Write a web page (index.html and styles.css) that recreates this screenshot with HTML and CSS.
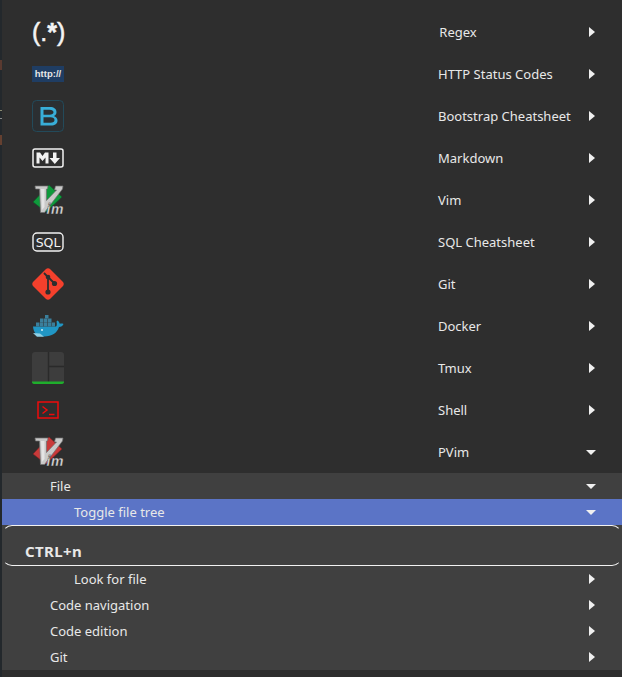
FILE: index.html
```html
<!DOCTYPE html>
<html lang="en">
<head>
<meta charset="utf-8">
<title>Cheatsheets</title>
<link rel="stylesheet" href="styles.css">
</head>
<body>
<svg class="defs" width="0" height="0" aria-hidden="true">
  <defs>
    <g id="vim-v">
      <path d="M3 2H16L15.500 5H14.500V16.500L24.500 6H22.500L23.500 2H31L30.500 5L12.500 28.500H8.500L7.500 5H3.500Z" fill="#c9c9c9" stroke="#6e6e6e" stroke-width=".7"/>
      <path d="M9 5H12.500V23L10 26Z" fill="#e4e4e4"/>
    </g>
  </defs>
</svg>
<main class="menu">
  <section class="row"><span class="icon"><span class="regex">(.<b>*</b>)</span></span><span class="label">Regex</span><span class="arrow right"></span></section>
  <section class="row"><span class="icon"><span class="http">http://</span></span><span class="label">HTTP Status Codes</span><span class="arrow right"></span></section>
  <section class="row"><span class="icon"><svg width="32" height="32" viewBox="0 0 32 32"><rect x=".5" y=".5" width="31" height="31" rx="4" fill="#2b2f32" stroke="#234a5a"/><path fill="#38aed8" fill-rule="evenodd" d="M8.500 7H18C22 7 24.500 9 24.500 12C24.500 14 23.500 15.400 21.800 16C24 16.600 25.500 18.300 25.500 20.500C25.500 23.700 23 25.500 19 25.500H8.500ZM11.500 9.800V14.700H17.500C20 14.700 21.500 13.800 21.500 12.200C21.500 10.700 20 9.800 17.500 9.800ZM11.500 17.300V22.700H18.500C21 22.700 22.500 21.700 22.500 20C22.500 18.300 21 17.300 18.500 17.300Z"/></svg></span><span class="label">Bootstrap Cheatsheet</span><span class="arrow right"></span></section>
  <section class="row"><span class="icon"><svg width="32" height="20" viewBox="0 0 32 20"><rect x="1" y="1" width="30" height="18" rx="2" fill="#2e2e2e" stroke="#f2f2f2" stroke-width="1.500"/><path fill="#f2f2f2" d="M4.500 15.500V4.500H8L10.500 8L13 4.500H16.500V15.500H13.500V9.500L10.500 13L7.500 9.500V15.500ZM21 4.500H24.500V10H28L22.800 16L17.500 10H21Z"/></svg></span><span class="label">Markdown</span><span class="arrow right"></span></section>
  <section class="row"><span class="icon"><svg width="32" height="32" viewBox="0 0 32 32"><path d="M1 18L17 1L30 13L14 28Z" fill="#0f9a3c" stroke="#0a5c25" stroke-width=".6"/><use href="#vim-v"/><text class="vim-im" x="14.500" y="30">im</text></svg></span><span class="label">Vim</span><span class="arrow right"></span></section>
  <section class="row"><span class="icon"><svg width="32" height="20" viewBox="0 0 32 20"><rect x="1" y="1" width="30" height="18" rx="4" fill="none" stroke="#f2f2f2" stroke-width="1.400"/><text class="sql" x="16" y="15">SQL</text></svg></span><span class="label">SQL Cheatsheet</span><span class="arrow right"></span></section>
  <section class="row"><span class="icon"><svg width="32" height="32" viewBox="0 0 32 32"><path fill="#f4402c" d="M14 1C15 0 17 0 18 1L31 14C32 15 32 17 31 18L18 31C17 32 15 32 14 31L1 18C0 17 0 15 1 14Z"/><path d="M12 5L16 9V23M16 9L22 15" fill="none" stroke="#2e2e2e" stroke-width="1.800"/><circle cx="16" cy="24" r="2.600" fill="#2e2e2e"/><circle cx="16" cy="9" r="2.300" fill="#2e2e2e"/><circle cx="22.500" cy="15.500" r="2.600" fill="#2e2e2e"/></svg></span><span class="label">Git</span><span class="arrow right"></span></section>
  <section class="row"><span class="icon"><svg width="32" height="24" viewBox="0 0 32 24"><path fill="#2196c4" d="M1 12.500H24C25 12 25 9.500 24.500 7.500L25.500 6.500C27 7.500 27.500 8.800 27.800 9.800C29 9.400 30.500 9.500 31.500 10C30.800 12 29 13 27 13C25 19 20 22.500 12 22.500C5 22.500 1.500 19 1 12.500Z"/><g fill="#3a7f9c"><rect x="4" y="8.500" width="3.500" height="4"/><rect x="8" y="8.500" width="3.500" height="4"/><rect x="12" y="8.500" width="3.500" height="4"/><rect x="16" y="8.500" width="3.500" height="4"/><rect x="20" y="8.500" width="3" height="4"/><rect x="8" y="4.500" width="3.500" height="4"/><rect x="12" y="4.500" width="3.500" height="4"/><rect x="16" y="4.500" width="3.500" height="4"/><rect x="13" y="1" width="3.500" height="3.500"/></g><path fill="#8fd0e6" d="M1 19L8 19.500L12 22.800H5Z"/><circle cx="10" cy="16" r="1" fill="#d5eef7"/></svg></span><span class="label">Docker</span><span class="arrow right"></span></section>
  <section class="row"><span class="icon"><svg width="32" height="32" viewBox="0 0 32 32"><path fill="#3d3d3d" d="M3 0H29A3 3 0 0 1 32 3V30H0V3A3 3 0 0 1 3 0Z"/><path d="M16.500 0V30M16.500 14.500H32" stroke="#2a2a2a" stroke-width="1.400"/><path fill="#1fae2c" d="M0 29.500H32V30C32 31.500 31 32 29 32H3C1 32 0 31.500 0 30Z"/></svg></span><span class="label">Tmux</span><span class="arrow right"></span></section>
  <section class="row"><span class="icon"><svg width="22" height="18" viewBox="0 0 22 18"><rect x="1" y="1" width="20" height="16" fill="none" stroke="#ee0b0b" stroke-width="1.500"/><path d="M5.500 5.500L10 9L5.500 12.500" fill="none" stroke="#ee0b0b" stroke-width="1.500"/><path d="M12 13.500H17.500" stroke="#ee0b0b" stroke-width="1.500"/></svg></span><span class="label">Shell</span><span class="arrow right"></span></section>
  <section class="row"><span class="icon"><svg width="32" height="32" viewBox="0 0 32 32"><path d="M1 18L17 1L30 13L14 28Z" fill="#c93a3a" stroke="#7c2020" stroke-width=".6"/><use href="#vim-v"/><text class="vim-im" x="14.500" y="30">im</text></svg></span><span class="label">PVim</span><span class="arrow down"></span></section>

  <div class="sub">
    <div class="sub-row"><span class="sub-label">File</span><span class="arrow down"></span></div>
    <div class="sub-row nested active"><span class="sub-label">Toggle file tree</span><span class="arrow down"></span></div>
    <div class="keys">CTRL+n</div>
    <div class="sub-row nested"><span class="sub-label">Look for file</span><span class="arrow right"></span></div>
    <div class="sub-row"><span class="sub-label">Code navigation</span><span class="arrow right"></span></div>
    <div class="sub-row"><span class="sub-label">Code edition</span><span class="arrow right"></span></div>
    <div class="sub-row"><span class="sub-label">Git</span><span class="arrow right"></span></div>
  </div>
</main>
</body>
</html>
```

FILE: styles.css
```css
* { box-sizing: border-box; }

html, body {
  margin: 0;
  height: 100%;
  overflow: hidden;
}

body {
  background: #2e2e2e;
  color: #e8e8e8;
  font-family: "Noto Sans", "Open Sans", sans-serif;
  font-size: 13px;
}

.defs { display: block; height: 0; }

.menu {
  min-height: 100vh;
  padding: 11px 0 7px 2px;
  background: linear-gradient(
    #23282c 0 60px, #5a3a30 60px 70px, #23282c 70px 110px,
    #8a8a70 110px 111px, #23282c 111px 118px, #8a8a8a 118px 119px,
    #23282c 119px 135px, #654030 135px 145px, #23282c 145px
  ) left top / 2px 100% no-repeat;
}

.row {
  display: flex;
  align-items: center;
  height: 42px;
  padding-left: 30px;
}

.icon {
  flex: 0 0 32px;
  height: 32px;
  display: flex;
  align-items: center;
  justify-content: center;
}

.label {
  flex: 1;
  margin-left: 374px;
}

.arrow {
  flex: 0 0 auto;
  width: 0;
  height: 0;
}

.row .arrow, .sub-row .arrow { margin-right: 26px; }

.arrow.right {
  border-top: 5px solid transparent;
  border-bottom: 5px solid transparent;
  border-left: 6px solid #f0f0f0;
  margin-left: 3px;
  margin-right: 27px;
}

.arrow.down {
  border-left: 5px solid transparent;
  border-right: 5px solid transparent;
  border-top: 5px solid #f0f0f0;
}

.regex {
  font-family: "Liberation Sans", sans-serif;
  font-size: 25px;
  color: #f4f4f4;
  line-height: 1;
  white-space: nowrap;
  -webkit-text-stroke: .5px #f4f4f4;
}

.http {
  display: block;
  width: 32px;
  height: 16px;
  background: #1f3d63;
  color: #e6e6e6;
  font-family: "Liberation Sans", sans-serif;
  font-size: 9.500px;
  font-weight: 700;
  line-height: 16px;
  text-align: center;
}

.vim-im {
  font-family: "Liberation Sans", sans-serif;
  font-size: 14px;
  font-style: italic;
  font-weight: 700;
  letter-spacing: .5px;
  fill: #d8d8d8;
  stroke: #2e2e2e;
  stroke-width: .3px;
}

.sql {
  font-family: "DejaVu Sans", sans-serif;
  font-size: 12.500px;
  fill: #f2f2f2;
  text-anchor: middle;
}

.sub {
  background: #404040;
}

.sub-row {
  display: flex;
  align-items: center;
  justify-content: space-between;
  height: 26px;
  padding-left: 48px;
}

.sub-row.nested { padding-left: 72px; }

.sub-row.active { background: #5b74c6; }

.keys {
  height: 41px;
  padding: 13px 0 0 22px;
  border: 1px solid transparent;
  border-top-color: #f2f2f2;
  border-bottom-color: #f2f2f2;
  border-radius: 10px;
  font-size: 15px;
  font-weight: 700;
  letter-spacing: .4px;
  line-height: 24px;
}
```
